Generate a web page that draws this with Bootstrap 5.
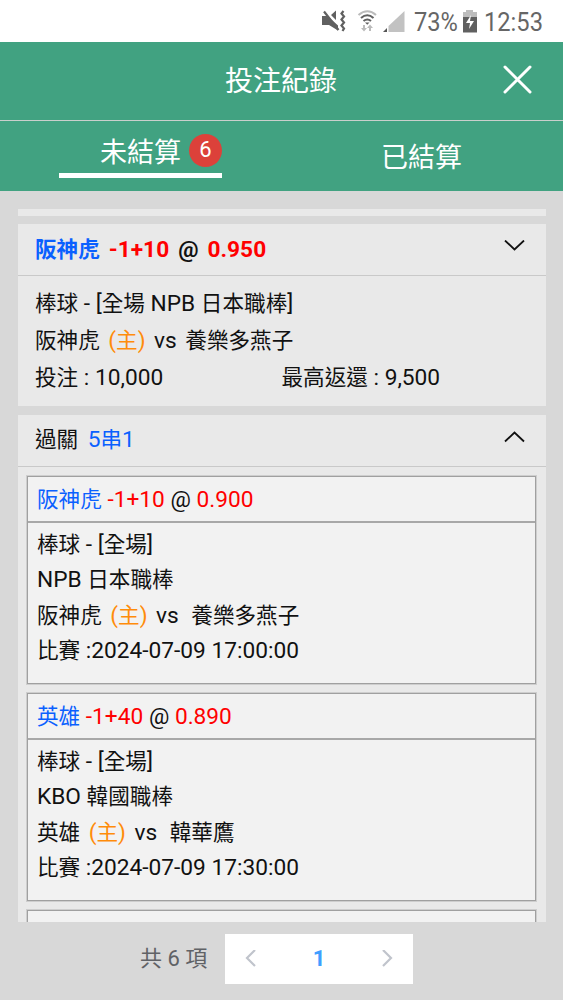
<!DOCTYPE html>
<html lang="zh-Hant">
<head>
<meta charset="utf-8">
<meta name="viewport" content="width=device-width, initial-scale=1">
<title>投注紀錄</title>
<link href="https://cdn.jsdelivr.net/npm/bootstrap@5.3.0/dist/css/bootstrap.min.css" rel="stylesheet">
<style>
  body { font-family: Roboto, "Noto Sans CJK TC", sans-serif; font-size: 21.6px; line-height: 37px; background: #d8d8d8; color: #111; height: 1000px; }
  svg { display: block; flex: none; }
  .status { height: 42px; color: #666; font-size: 26.6px; line-height: 44px; padding-left: 321px; }
  .narrow { display: inline-block; transform: scaleX(.89); transform-origin: 0 50%; white-space: nowrap; }
  .topbar { height: 79px; background: #41a281; border-bottom: 1px solid #c9cfcc; color: #fff; font-size: 28px; padding: 0 31px 3px 30px; }
  .tabs { height: 70px; background: #41a281; color: #fff; font-size: 27px; }
  .tab-on { width: 163px; height: 57px; margin-left: 59px; border-bottom: 5px solid #fff; padding-left: 41px; padding-top: 7px; }
  .count { width: 33px; height: 33px; margin-top: 6px; background: #dc413a; font-size: 22px; line-height: 32px; }
  .tab-off { padding: 4px 101px 0 0; }
  .records { height: 713px; margin: 18px 17px 0 18px; overflow: hidden; }
  .stub { height: 7px; background: #e9e9e9; flex: none; }
  .bet { background: #e9e9e9; border: 0; border-radius: 0; color: inherit; flex: none; }
  .bet-head { height: 52px; border-bottom: 1px solid #c9c9c9; padding: 0 21px 0 17px; }
  .bet-body { height: 130px; padding: 9px 18px 0 17px; }
  .latin { font-size: 22.7px; line-height: 1; }
  .leg { background: #f2f2f2; border: 1px solid #a0a0a0; box-shadow: 0 0 0 1px #cecece; height: 208px; margin-bottom: 9px; flex: none; }
  .leg-head { height: 46px; line-height: 45px; border-bottom: 2px solid #a8a8a8; padding-left: 9px; }
  .leg-body { line-height: 35.4px; padding: 4px 0 0 9px; }
  .team { color: #0a60ff; } .odds { color: #f00; } .host { color: #ff8c0a; }
  .pager { height: 78px; color: #606266; padding: 12px 150px 0 140px; font-size: 22px; }
  .pages { width: 188px; height: 50px; background: #fff; padding: 0 19px; color: #409eff; }
</style>
</head>
<body class="d-flex flex-column overflow-hidden">
<div class="status bg-white d-flex">
  <svg width="93" height="42" viewBox="321 0 93 42">
    <path d="M322 16h5.500l10.500 9.500v5l-9-5.500h-7zM331 15l5-4.500v9.500z" fill="#606060"/>
    <path d="M324 11.500l14.500 18.500" stroke="#606060" stroke-width="2.200"/>
    <path d="M343.500 11l-2 2.500 2.500 3-2.500 3 2.500 3-2.500 3 2.500 3-1.500 2.500" fill="none" stroke="#606060" stroke-width="2.200"/>
    <g fill="none" stroke-width="2.100">
      <path d="M358.500 15q9-7.500 17.500 0" stroke="#bbb"/>
      <path d="M361 18q6.300-5.500 12.500 0M363.500 21q3.800-3 7.500 0" stroke="#606060"/>
    </g>
    <path d="M365 22.500h4.500l-2.200 2.200z" fill="#606060"/>
    <path d="M363 25h2v3h2l-3 3.500-3-3.500h2zM369 31v-3h-2l3-3.500 3 3.500h-2v3z" fill="#bbb"/>
    <path d="M404.500 11v21h-16v-6z" fill="#c2c2c2"/><path d="M387 28v4h-4z" fill="#555"/>
  </svg>
  <span class="narrow" style="width:49px">73%</span>
  <svg width="14" height="42" viewBox="463 0 14 42">
    <path d="M463 17v-5h3v-2h7v2h4v5z" fill="#bdbdbd"/><path d="M463 17h14v15.500h-14z" fill="#606060"/><path d="M471 15l-5 8h4l-1 6 5-8h-4z" fill="#fff"/>
  </svg>
  <span class="narrow" style="margin-left:7px">12:53</span>
</div>
<header class="topbar d-flex align-items-center justify-content-between">
  <span style="width:29px"></span><span class="pt-1">投注紀錄</span>
  <svg width="29" height="29" viewBox="0 0 29 29"><path d="M2 2l25 25M27 2L2 27" stroke="#fff" stroke-width="3" stroke-linecap="round"/></svg>
</header>
<nav class="tabs d-flex justify-content-between">
  <div class="tab-on d-flex">
    <span class="text-nowrap" style="line-height:50px">未結算</span><span class="count rounded-circle text-center ms-auto">6</span>
  </div>
  <div class="tab-off d-flex align-items-center">已結算</div>
</nav>
<main class="records d-flex flex-column">
  <div class="stub"></div>
  <section class="card bet" style="margin-top:8px">
    <div class="bet-head d-flex justify-content-between fw-bold">
      <div class="d-flex align-items-baseline" style="gap:9px;line-height:51px"><span class="team">阪神虎</span><span class="odds latin">-1+10</span><span class="latin">@</span><span class="odds latin">0.950</span></div>
      <svg class="mt-3" width="21" height="12" viewBox="0 0 21 12"><path d="M1 .5l9.500 9L20 .5" fill="none" stroke="#111" stroke-width="1.800"/></svg>
    </div>
    <div class="bet-body">
      <div>棒球<span class="latin"> - [</span>全場<span class="latin"> NPB </span>日本職棒<span class="latin">]</span></div>
      <div class="d-flex align-items-baseline" style="gap:8.500px"><span>阪神虎</span><span class="host"><span class="latin">(</span>主<span class="latin">)</span></span><span class="latin">vs</span><span>養樂多燕子</span></div>
      <div class="row g-0"><span class="col-6">投注<span class="latin"> : 10,000</span></span><span class="col-6">最高返還<span class="latin"> : 9,500</span></span></div>
    </div>
  </section>
  <section class="card bet" style="margin-top:9px">
    <div class="bet-head d-flex justify-content-between">
      <div class="d-flex align-items-baseline" style="gap:9.500px;line-height:49px"><span>過關</span><span class="team"><span class="latin">5</span>串<span class="latin">1</span></span></div>
      <svg class="mt-3" width="21" height="12" viewBox="0 0 21 12"><path d="M1 10.500l9.500-9L20 10.500" fill="none" stroke="#111" stroke-width="1.800"/></svg>
    </div>
    <div class="d-flex flex-column" style="padding:9px 10px 0 9px">
      <article class="leg">
        <div class="leg-head"><span class="team">阪神虎</span><span class="latin"> <span class="odds">-1+10</span> @ <span class="odds">0.900</span></span></div>
        <div class="leg-body">
          <div>棒球<span class="latin"> - [</span>全場<span class="latin">]</span></div><div><span class="latin">NPB </span>日本職棒</div>
          <div class="d-flex align-items-baseline" style="gap:8.500px"><span>阪神虎</span><span class="host"><span class="latin">(</span>主<span class="latin">)</span></span><span class="latin">vs</span><span class="ms-1">養樂多燕子</span></div>
          <div>比賽<span class="latin"> :2024-07-09 17:00:00</span></div>
        </div>
      </article>
      <article class="leg">
        <div class="leg-head"><span class="team">英雄</span><span class="latin"> <span class="odds">-1+40</span> @ <span class="odds">0.890</span></span></div>
        <div class="leg-body">
          <div>棒球<span class="latin"> - [</span>全場<span class="latin">]</span></div><div><span class="latin">KBO </span>韓國職棒</div>
          <div class="d-flex align-items-baseline" style="gap:8.500px"><span>英雄</span><span class="host"><span class="latin">(</span>主<span class="latin">)</span></span><span class="latin">vs</span><span class="ms-1">韓華鷹</span></div>
          <div>比賽<span class="latin"> :2024-07-09 17:30:00</span></div>
        </div>
      </article>
      <article class="leg"></article>
    </div>
  </section>
</main>
<footer class="pager d-flex justify-content-between">
  <span style="line-height:49px">共 6 項</span>
  <div class="pages d-flex align-items-center justify-content-between fw-bold">
    <svg width="14" height="18" viewBox="0 0 14 18"><path d="M11 0L3 8l8 8" fill="none" stroke="#c0c4cc" stroke-width="2.200"/></svg>
    <span style="margin-top:-2px">1</span>
    <svg width="14" height="18" viewBox="0 0 14 18"><path d="M3 0l8 8-8 8" fill="none" stroke="#c0c4cc" stroke-width="2.200"/></svg>
  </div>
</footer>
<script src="https://cdn.jsdelivr.net/npm/bootstrap@5.3.0/dist/js/bootstrap.bundle.min.js"></script>
</body>
</html>
